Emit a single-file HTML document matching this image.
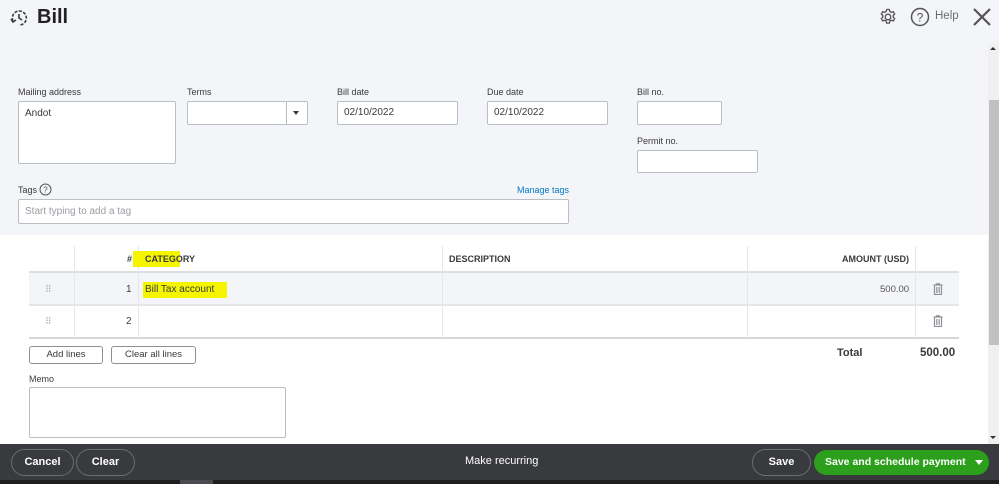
<!DOCTYPE html>
<html><head><style>
*{box-sizing:border-box;margin:0;padding:0}
body{width:999px;height:484px;overflow:hidden;background:#f4f5f8;font-family:"Liberation Sans",sans-serif;color:#393a3d;position:relative}
.a{position:absolute}
.lbl{font-size:9px;color:#393a3d}
.in{background:#fff;border:1px solid #babec5;border-radius:2px;font-size:10px;color:#393a3d;padding:0 6px}
.th{font-size:9px;font-weight:bold;color:#393a3d}
.btn{border:1px solid #8d9096;border-radius:3px;background:#fff;font-size:9.5px;text-align:center;line-height:15px}
.fb{border:1px solid #6b6c72;border-radius:16px;color:#fff;font-size:11px;text-align:center;line-height:25px;font-weight:bold}
.dots{font-size:9px;color:#aaa;letter-spacing:-1px}
</style></head><body>
<svg class="a" style="left:9px;top:8px" width="20" height="20" viewBox="0 0 20 20" fill="none" stroke="#393a3d" stroke-width="1.6"><path d="M4 13 A7 7 0 1 1 10 17" stroke-dasharray="3 1.5"/><path d="M10 6 V10 L13 12"/><path d="M2 11 L4 14 L7 12"/></svg>
<div class="a" style="left:37px;top:6px;font-size:20px;font-weight:bold;color:#222">Bill</div>
<svg class="a" style="left:879px;top:8px" width="18" height="18" viewBox="0 0 18 18" fill="none" stroke="#555" stroke-width="1.3"><circle cx="9" cy="9" r="2.8"/><path d="M7.6 1.5h2.8l.4 2 1.6.9 1.9-.7 1.4 2.4-1.5 1.3v1.8l1.5 1.3-1.4 2.4-1.9-.7-1.6.9-.4 2H7.6l-.4-2-1.6-.9-1.9.7-1.4-2.4 1.5-1.3V7.4L2.3 6.1l1.4-2.4 1.9.7 1.6-.9z"/></svg>
<svg class="a" style="left:910px;top:7px" width="20" height="20" viewBox="0 0 20 20"><circle cx="10" cy="10" r="8.5" fill="none" stroke="#555" stroke-width="1.5"/><text x="10" y="14.5" font-size="12" text-anchor="middle" fill="#555" font-family="Liberation Sans">?</text></svg>
<div class="a" style="left:935px;top:10px;font-size:11.5px;color:#6b6c72">Help</div>
<svg class="a" style="left:972px;top:7px" width="20" height="20" viewBox="0 0 20 20" stroke="#555" stroke-width="2.2"><path d="M2 2L18 18M18 2L2 18"/></svg>

<div class="a lbl" style="left:18px;top:87px">Mailing address</div>
<div class="a in" style="left:18px;top:101px;width:158px;height:63px;padding-top:6px">Andot</div>
<div class="a lbl" style="left:187px;top:87px">Terms</div>
<div class="a in" style="left:187px;top:101px;width:121px;height:24px"></div>
<div class="a" style="left:286px;top:102px;width:1px;height:22px;background:#babec5"></div>
<div class="a" style="left:293px;top:111px;border-left:3.5px solid transparent;border-right:3.5px solid transparent;border-top:4px solid #393a3d"></div>
<div class="a lbl" style="left:337px;top:87px">Bill date</div>
<div class="a in" style="left:337px;top:101px;width:121px;height:24px;line-height:22px">02/10/2022</div>
<div class="a lbl" style="left:487px;top:87px">Due date</div>
<div class="a in" style="left:487px;top:101px;width:121px;height:24px;line-height:22px">02/10/2022</div>
<div class="a lbl" style="left:637px;top:87px">Bill no.</div>
<div class="a in" style="left:637px;top:101px;width:85px;height:24px"></div>
<div class="a lbl" style="left:637px;top:136px">Permit no.</div>
<div class="a in" style="left:637px;top:150px;width:121px;height:23px"></div>
<div class="a lbl" style="left:18px;top:185px">Tags</div>
<svg class="a" style="left:39px;top:183px" width="13" height="13" viewBox="0 0 13 13"><circle cx="6.5" cy="6.5" r="5.5" fill="none" stroke="#555" stroke-width="1"/><text x="6.5" y="9.5" font-size="8" text-anchor="middle" fill="#555" font-family="Liberation Sans">?</text></svg>
<div class="a" style="left:517px;top:185px;font-size:9px;color:#0077c5">Manage tags</div>
<div class="a in" style="left:18px;top:199px;width:551px;height:25px;line-height:23px;color:#9a9ca2">Start typing to add a tag</div>

<div class="a" style="left:0;top:235px;width:988px;height:209px;background:#fff"></div>
<div class="a" style="left:29px;top:272px;width:930px;height:32px;background:#f4f5f8"></div>
<div class="a" style="left:29px;top:271px;width:930px;height:2px;background:#dcdee1"></div>
<div class="a" style="left:29px;top:304px;width:930px;height:2px;background:#e4e6e9"></div>
<div class="a" style="left:29px;top:337px;width:930px;height:2px;background:#d4d6d9"></div>
<div class="a" style="left:74px;top:246px;width:1px;height:92px;background:#e4e6e9"></div>
<div class="a" style="left:138px;top:246px;width:1px;height:92px;background:#e4e6e9"></div>
<div class="a" style="left:442px;top:246px;width:1px;height:92px;background:#e4e6e9"></div>
<div class="a" style="left:747px;top:246px;width:1px;height:92px;background:#e4e6e9"></div>
<div class="a" style="left:915px;top:246px;width:1px;height:92px;background:#e4e6e9"></div>
<div class="a" style="left:133px;top:251px;width:47px;height:16px;background:#f5f500"></div>
<div class="a th" style="left:127px;top:254px">#</div>
<div class="a th" style="left:145px;top:254px">CATEGORY</div>
<div class="a th" style="left:449px;top:254px">DESCRIPTION</div>
<div class="a th" style="left:842px;top:254px">AMOUNT (USD)</div>
<div class="a dots" style="left:45px;top:284px">⠿</div>
<div class="a dots" style="left:45px;top:316px">⠿</div>
<div class="a" style="left:126px;top:284px;font-size:10px">1</div>
<div class="a" style="left:126px;top:316px;font-size:10px">2</div>
<div class="a" style="left:143px;top:282px;width:84px;height:16px;background:#f5f500"></div>
<div class="a" style="left:145px;top:284px;font-size:10px;color:#393a3d">Bill Tax account</div>
<div class="a" style="left:880px;top:284px;font-size:9.5px;color:#555">500.00</div>
<svg class="a" style="left:933px;top:283px" width="10" height="12" viewBox="0 0 10 12" fill="none" stroke="#8d9096" stroke-width="1.2"><path d="M0.5 2h9M3.5 2V0.8h3V2M1.5 2v9.5h7V2M3.8 4v6M6.2 4v6"/></svg>
<svg class="a" style="left:933px;top:315px" width="10" height="12" viewBox="0 0 10 12" fill="none" stroke="#8d9096" stroke-width="1.2"><path d="M0.5 2h9M3.5 2V0.8h3V2M1.5 2v9.5h7V2M3.8 4v6M6.2 4v6"/></svg>

<div class="a btn" style="left:29px;top:346px;width:74px;height:18px">Add lines</div>
<div class="a btn" style="left:111px;top:346px;width:85px;height:18px">Clear all lines</div>
<div class="a" style="left:837px;top:347px;font-size:11px;font-weight:bold">Total</div>
<div class="a" style="left:920px;top:347px;font-size:11.5px;font-weight:bold">500.00</div>
<div class="a lbl" style="left:29px;top:374px">Memo</div>
<div class="a in" style="left:29px;top:387px;width:257px;height:51px"></div>

<div class="a" style="left:988px;top:43px;width:11px;height:401px;background:#f0f0f0"></div>
<div class="a" style="left:989px;top:100px;width:10px;height:245px;background:#c1c1c1"></div>
<div class="a" style="left:990px;top:47px;border-left:3px solid transparent;border-right:3px solid transparent;border-bottom:3px solid #333"></div>
<div class="a" style="left:990px;top:436px;border-left:3px solid transparent;border-right:3px solid transparent;border-top:3px solid #333"></div>

<div class="a" style="left:0;top:444px;width:999px;height:36px;background:#393a3d"></div>
<div class="a" style="left:0;top:480px;width:999px;height:4px;background:#1e1f21"></div>
<div class="a" style="left:180px;top:480px;width:33px;height:4px;background:#4a4b4f"></div>
<div class="a fb" style="left:11px;top:449px;width:63px;height:27px">Cancel</div>
<div class="a fb" style="left:76px;top:449px;width:59px;height:27px">Clear</div>
<div class="a" style="left:465px;top:455px;font-size:11px;color:#fff">Make recurring</div>
<div class="a fb" style="left:752px;top:449px;width:59px;height:27px">Save</div>
<div class="a" style="left:814px;top:450px;width:175px;height:25px;border-radius:13px;background:#2ca01c;color:#fff;font-size:10.5px;font-weight:bold;line-height:25px;padding-left:11px">Save and schedule payment</div>
<div class="a" style="left:975px;top:460px;border-left:4px solid transparent;border-right:4px solid transparent;border-top:5px solid #fff"></div>
</body></html>
